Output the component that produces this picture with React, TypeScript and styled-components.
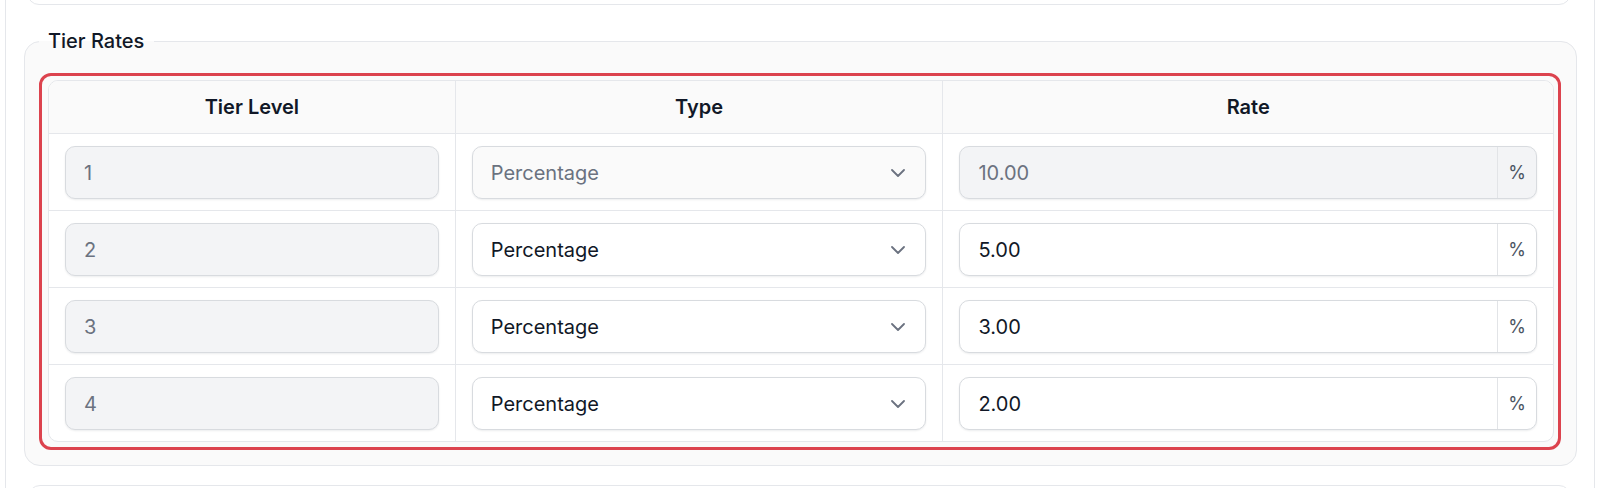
import styled, { createGlobalStyle } from 'styled-components';

const GlobalStyle = createGlobalStyle`
  html, body {
    margin: 0;
    background: #ffffff;
    font-family: Inter, "Liberation Sans", sans-serif;
    color: #111827;
  }
  * { box-sizing: border-box; }
`;

const Shell = styled.div`
  margin: 0 5px;
  height: 488px;
  overflow: hidden;
  border-left: 1px solid #e5e7eb;
  border-right: 1px solid #e5e7eb;
  padding: 0 17px 0 18px;
`;

const Card = styled.div<{ top?: boolean }>`
  height: 45px;
  margin: ${({ top }) => (top ? '-40px 6px 0 3px' : '19px 6px 0 4px')};
  border: 1px solid #e5e7eb;
  border-radius: 12px;
  background: #ffffff;
`;

const Fieldset = styled.fieldset`
  margin: 24px 0 0;
  padding: 20px 15px 15px 14px;
  border: 1px solid #e5e7eb;
  border-radius: 16px;
  background: #fafafa;
  min-width: 0;
`;

const Legend = styled.legend`
  padding: 0 10px 0 9px;
  font-size: 20px;
  line-height: 24px;
  font-weight: 500;
  color: #111827;
`;

const Highlight = styled.div`
  border: 3px solid #dc434e;
  border-radius: 12px;
  padding: 4px 4px 5px 6px;
`;

const Table = styled.div`
  display: grid;
  grid-template-columns: 406fr 488fr 611fr;
  border: 1px solid #e5e7eb;
  border-radius: 10px;
  overflow: hidden;
  background: #ffffff;
`;

const HeadCell = styled.div<{ first?: boolean }>`
  height: 53px;
  display: flex;
  align-items: center;
  justify-content: center;
  background: #fafafa;
  border-bottom: 1px solid #e5e7eb;
  border-left: ${({ first }) => (first ? 'none' : '1px solid #e5e7eb')};
  font-size: 20px;
  font-weight: 600;
  color: #111827;
`;

const Cell = styled.div<{ first?: boolean; last?: boolean }>`
  padding: 12px 16px 11px;
  border-left: ${({ first }) => (first ? 'none' : '1px solid #e5e7eb')};
  border-bottom: ${({ last }) => (last ? 'none' : '1px solid #e5e7eb')};
`;

const fieldBase = `
  height: 53px;
  width: 100%;
  border: 1px solid #d8dbdf;
  border-radius: 10px;
  box-shadow: 0 1px 2px rgba(17, 24, 39, 0.08);
  font-family: Inter, "Liberation Sans", sans-serif;
  font-size: 20px;
  outline: none;
`;

const LevelInput = styled.input`
  ${fieldBase}
  padding: 0 18px;
  background: #f3f4f6;
  color: #6b7280;
`;

const SelectWrap = styled.div`
  position: relative;
`;

const Select = styled.select<{ disabled?: boolean }>`
  ${fieldBase}
  appearance: none;
  padding: 0 50px 0 18px;
  background: ${({ disabled }) => (disabled ? '#fafafa' : '#ffffff')};
  color: ${({ disabled }) => (disabled ? '#6b7280' : '#111827')};
  opacity: 1;
`;

const Chevron = styled.svg`
  position: absolute;
  right: 21px;
  top: 50%;
  transform: translateY(-50%);
  pointer-events: none;
`;

const RateGroup = styled.div<{ disabled?: boolean }>`
  display: flex;
  height: 53px;
  border: 1px solid #d8dbdf;
  border-radius: 10px;
  box-shadow: 0 1px 2px rgba(17, 24, 39, 0.08);
  overflow: hidden;
  background: ${({ disabled }) => (disabled ? '#f3f4f6' : '#ffffff')};
`;

const RateInput = styled.input<{ disabled?: boolean }>`
  flex: 1;
  min-width: 0;
  border: none;
  outline: none;
  background: transparent;
  padding: 0 18px;
  font-family: Inter, "Liberation Sans", sans-serif;
  font-size: 20px;
  color: ${({ disabled }) => (disabled ? '#6b7280' : '#111827')};
`;

const Addon = styled.span`
  width: 39px;
  display: flex;
  align-items: center;
  justify-content: center;
  border-left: 1px solid #e2e4e7;
  font-size: 18px;
  color: #4b5563;
`;

const tiers = [
  { level: 1, rate: '10.00', locked: true },
  { level: 2, rate: '5.00', locked: false },
  { level: 3, rate: '3.00', locked: false },
  { level: 4, rate: '2.00', locked: false },
];

export default function App() {
  return (
    <>
      <GlobalStyle />
      <Shell>
        <Card top />
        <Fieldset>
          <Legend>Tier Rates</Legend>
          <Highlight>
            <Table>
              <HeadCell first>Tier Level</HeadCell>
              <HeadCell>Type</HeadCell>
              <HeadCell>Rate</HeadCell>
              {tiers.map((t, i) => {
                const last = i === tiers.length - 1;
                return [
                  <Cell key={`l${t.level}`} first last={last}>
                    <LevelInput readOnly value={t.level} />
                  </Cell>,
                  <Cell key={`t${t.level}`} last={last}>
                    <SelectWrap>
                      <Select disabled={t.locked} defaultValue="percentage">
                        <option value="percentage">Percentage</option>
                        <option value="fixed">Fixed</option>
                      </Select>
                      <Chevron width="14" height="8" viewBox="0 0 14 8" fill="none">
                        <path d="M1 1l6 6 6-6" stroke="#6b7280" strokeWidth="1.8" strokeLinecap="round" strokeLinejoin="round" />
                      </Chevron>
                    </SelectWrap>
                  </Cell>,
                  <Cell key={`r${t.level}`} last={last}>
                    <RateGroup disabled={t.locked}>
                      <RateInput disabled={t.locked} readOnly value={t.rate} />
                      <Addon>%</Addon>
                    </RateGroup>
                  </Cell>,
                ];
              })}
            </Table>
          </Highlight>
        </Fieldset>
        <Card />
      </Shell>
    </>
  );
}
